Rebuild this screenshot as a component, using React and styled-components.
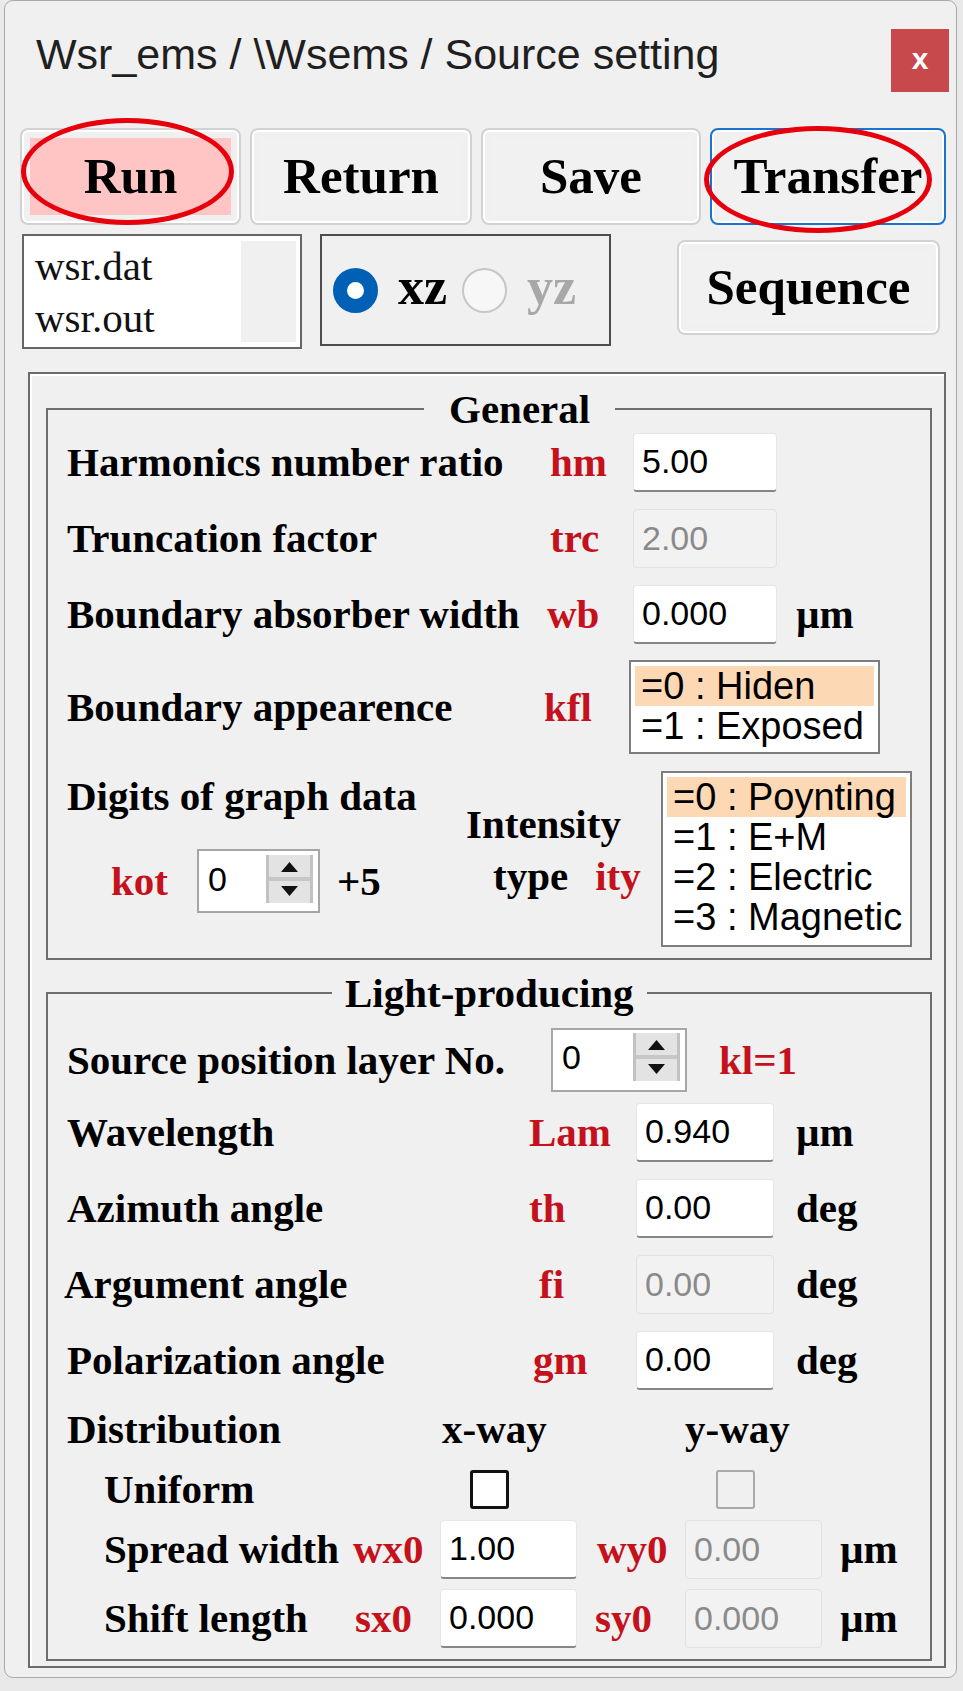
import React from "react"
import styled, {createGlobalStyle} from "styled-components"

const SERIF = `"Liberation Serif", "Times New Roman", serif`
const SANS = `"Liberation Sans", Arial, sans-serif`
const RED = "#c4111b"

const GlobalStyle = createGlobalStyle`
  html, body {
    margin: 0;
    padding: 0;
  }
  body {
    background: #e9e9e9;
    font-family: ${SERIF};
  }
  * {
    box-sizing: border-box;
  }
`

const Window = styled.div`
  margin-left: 4px;
  width: 953px;
  height: 1678px;
  background: #f0f0f0;
  border: 1px solid #a9a9a9;
  border-radius: 9px;
`

const TitleBar = styled.div`
  display: flex;
  align-items: flex-start;
  height: 110px;
  padding: 0 7px 0 31px;
`

const Title = styled.div`
  flex: 1;
  margin-top: 29px;
  font: 43px/48px ${SANS};
  color: #1f1f1f;
  white-space: nowrap;
`

const CloseButton = styled.div`
  display: flex;
  align-items: center;
  justify-content: center;
  width: 58px;
  height: 63px;
  margin-top: 28px;
  background: #c7494b;
  color: #fff;
  font: bold 30px/1 ${SANS};
  padding-bottom: 4px;
`

const Toolbar = styled.div`
  display: grid;
  grid-template-columns: 221px 222px 220px 236px;
  column-gap: 9px;
  margin: 17px 0 0 15px;
`

const Button = styled.div`
  position: relative;
  display: flex;
  align-items: center;
  justify-content: center;
  width: ${p => p.$w ? `${p.$w}px` : "auto"};
  height: ${p => p.$h || 97}px;
  margin: ${p => p.$m || "0"};
  padding: 8px;
  border: 2px solid ${p => p.$focused ? "#1a73cf" : "#d2d2d2"};
  border-radius: 8px;
  background: ${p => p.$tint || "#f1f1f1"};
  background-clip: content-box;
  box-shadow: inset 0 0 0 2px #fff;
  font: bold 51px/1 ${SERIF};
  color: #000;
  white-space: nowrap;
`

const Ellipse = styled.span`
  position: absolute;
  left: ${p => p.$x}px;
  top: ${p => p.$y}px;
  width: ${p => p.$w}px;
  height: 107px;
  border: 5px solid #e6000c;
  border-radius: 50%;
  pointer-events: none;
`

const SecondRow = styled.div`
  display: flex;
  align-items: flex-start;
  margin: 9px 0 0 17px;
`

const FileList = styled.div`
  display: flex;
  width: 280px;
  height: 115px;
  border: 2px solid #666;
  background: #fff;
`

const FileNames = styled.div`
  flex: 1;
  padding: 4px 0 0 11px;
  font: 41px/52px ${SERIF};
  color: #111;
`

const ScrollTrack = styled.div`
  width: 55px;
  margin: 5px 4px 5px 0;
  background: #f0f0f0;
`

const RadioBox = styled.div`
  display: flex;
  align-items: center;
  width: 291px;
  height: 112px;
  margin-left: 18px;
  padding-left: 11px;
  border: 2px solid #4d4d4d;
`

const Radio = styled.span`
  display: block;
  flex: none;
  width: 45px;
  height: 45px;
  margin-left: ${p => p.$ml || 0}px;
  border-radius: 50%;
  background: ${p => p.$checked ? "#fff" : "#f7f7f7"};
  border: ${p => p.$checked ? "14px solid #0060b6" : "2px solid #c6c6c6"};
`

const RadioLabel = styled.span`
  margin-left: 20px;
  font: bold 52px/1 ${SERIF};
  color: ${p => p.$off ? "#a8a8a8" : "#000"};
  padding-bottom: 6px;
`

const OuterGroup = styled.div`
  width: 918px;
  height: 1296px;
  margin: 23px 0 0 23px;
  padding: 12px 12px 0 16px;
  border: 2px solid #6b6b6b;
  box-shadow: inset 2px 2px 0 #fff;
`

const Group = styled.fieldset`
  min-width: 0;
  margin: 0 0 ${p => p.$mb || 0}px;
  padding: 0;
  border: 2px solid #6e6e6e;
`

const Legend = styled.legend`
  margin-left: ${p => p.$offset}px;
  padding: 0 ${p => p.$pad}px;
  font: bold 41px/46px ${SERIF};
  color: #000;
`

const GroupBody = styled.div`
  display: flex;
  flex-direction: column;
  padding: ${p => p.$pt || 0}px 0 11px 19px;
`

const FieldRow = styled.div`
  display: grid;
  grid-template-columns: 461px ${p => p.$codeW}px ${p => p.$inW}px auto;
  align-items: center;
  height: ${p => p.$h || 60}px;
  margin-top: ${p => p.$mt || 0}px;
`

const Label = styled.span`
  margin-left: ${p => p.$ml || 0}px;
  padding-left: ${p => p.$pl || 0}px;
  font: bold 41px/46px ${SERIF};
  color: #000;
  white-space: nowrap;
`

const Code = styled.span`
  margin-right: ${p => p.$mr || 0}px;
  padding-left: ${p => p.$pl || 0}px;
  font: bold 41px/46px ${SERIF};
  color: ${RED};
  white-space: nowrap;
`

const Unit = styled.span`
  padding-left: ${p => p.$pl || 0}px;
  font: bold 41px/46px ${SERIF};
  color: #000;
`

const TextBox = styled.input`
  display: block;
  width: 100%;
  height: ${p => p.$h || 59}px;
  margin: 0;
  padding: 0 0 0 8px;
  border: 1px solid ${p => p.$off ? "#e1e1e1" : "#e6e6e6"};
  border-bottom: ${p => p.$off ? "1px solid #e1e1e1" : "2px solid #868686"};
  border-radius: 4px;
  background: ${p => p.$off ? "#f2f2f2" : "#fff"};
  font: 34px ${SANS};
  color: ${p => p.$off ? "#8a8a8a" : "#000"};
  outline: none;
`

const ListBox = styled.div`
  width: 251px;
  height: ${p => p.$h}px;
  margin: ${p => p.$m || "0"};
  padding: 4px;
  border: 2px solid #7d7d7d;
  background: #fff;
  font: 38px/40px ${SANS};
  color: #000;
  justify-self: start;
`

const ListItem = styled.div`
  padding-left: 6px;
  background: ${p => p.$selected ? "#fdd8b5" : "transparent"};
  white-space: nowrap;
`

const DigitsRow = styled.div`
  display: flex;
  align-items: flex-start;
  height: 177px;
  margin-top: 17px;
`

const DigitsBlock = styled.div`
  display: flex;
  flex-direction: column;
  width: 399px;
  padding-top: 3px;
`

const KotLine = styled.div`
  display: flex;
  align-items: center;
  margin-top: 30px;
  padding-left: 44px;
`

const IntensityBlock = styled.div`
  display: flex;
  flex-direction: column;
  width: 195px;
  padding-top: 31px;
`

const TypeLine = styled.div`
  display: flex;
  margin-top: 6px;
  padding-left: 27px;
`

const SpinFrame = styled.div`
  display: flex;
  justify-content: space-between;
  align-items: flex-start;
  width: ${p => p.$w}px;
  height: 64px;
  padding: ${p => p.$pt || 4}px 5px 0 9px;
  border: 2px solid #a6a6a6;
  background: #fff;
  font: 34px/48px ${SANS};
  color: #000;
`

const SourceRow = styled.div`
  display: grid;
  grid-template-columns: 484px 136px auto;
  align-items: center;
  height: 64px;
`

const DistRow = styled.div`
  display: grid;
  grid-template-columns: 375px 243px auto;
  align-items: center;
  height: 58px;
  margin-top: 10px;
`

const SubRow = styled.div`
  display: grid;
  grid-template-columns: 249px 87px 137px 108px 137px auto;
  align-items: center;
  height: ${p => p.$h || 60}px;
  margin-top: ${p => p.$mt || 0}px;
  padding-left: 37px;
`

const CheckBox = styled.span`
  display: block;
  width: 39px;
  height: 39px;
  margin-left: ${p => p.$ml || 0}px;
  border-radius: 3px;
  border: ${p => p.$off ? "2px solid #a9a9a9" : "3px solid #111"};
  background: ${p => p.$off ? "#f0f0f0" : "#fff"};
`

const Spinner = () => (
  <svg width="47" height="48" viewBox="0 0 47 48">
    <rect x="0" y="0" width="47" height="48" fill="#e3e3e3" />
    <rect x="0" y="0" width="3" height="48" fill="#c2c2c2" />
    <rect x="44" y="0" width="3" height="48" fill="#c2c2c2" />
    <rect x="3" y="22" width="41" height="4" fill="#c6c6c6" />
    <path d="M23.5 7 L32 17 L15 17 Z" fill="#111" />
    <path d="M15 31 L32 31 L23.5 41 Z" fill="#111" />
  </svg>
)

const SpinBox = ({width, top}) => (
  <SpinFrame $w={width} $pt={top}>
    <span>0</span>
    <Spinner />
  </SpinFrame>
)

const GENERAL = {codeW: 105, inW: 144, unitPl: 19}
const LIGHT = {codeW: 108, inW: 138, unitPl: 22}

const Field = ({cfg, label, code, codePl, value, off, unit, mt, labelMl}) => (
  <FieldRow $codeW={cfg.codeW} $inW={cfg.inW} $mt={mt}>
    <Label $ml={labelMl}>{label}</Label>
    <Code $pl={codePl}>{code}</Code>
    <TextBox value={value} readOnly disabled={off} $off={off} />
    {unit ? <Unit $pl={cfg.unitPl}>{unit}</Unit> : <span />}
  </FieldRow>
)

const App = () => (
  <>
    <GlobalStyle />
    <Window>
      <TitleBar>
        <Title>Wsr_ems / \Wsems / Source setting</Title>
        <CloseButton>x</CloseButton>
      </TitleBar>

      <Toolbar>
        <Button $tint="#ffc4c4">
          Run
          <Ellipse $x={-1} $y={-12} $w={213} />
        </Button>
        <Button>Return</Button>
        <Button>Save</Button>
        <Button $focused>
          Transfer
          <Ellipse $x={-8} $y={-4} $w={228} />
        </Button>
      </Toolbar>

      <SecondRow>
        <FileList>
          <FileNames>
            <div>wsr.dat</div>
            <div>wsr.out</div>
          </FileNames>
          <ScrollTrack />
        </FileList>
        <RadioBox>
          <Radio $checked />
          <RadioLabel>xz</RadioLabel>
          <Radio $ml={15} />
          <RadioLabel $off>yz</RadioLabel>
        </RadioBox>
        <Button $w={263} $h={95} $m="6px 0 0 66px">Sequence</Button>
      </SecondRow>

      <OuterGroup>
        <Group $mb={10}>
          <Legend $offset={376} $pad={25}>General</Legend>
          <GroupBody>
            <Field cfg={GENERAL} label="Harmonics number ratio" code="hm" codePl={22} value="5.00" />
            <Field cfg={GENERAL} label="Truncation factor" code="trc" codePl={22} value="2.00" off mt={16} />
            <Field cfg={GENERAL} label="Boundary absorber width" code="wb" codePl={19} value="0.000" unit="µm" mt={16} />

            <FieldRow $codeW={GENERAL.codeW} $inW={GENERAL.inW} $h={93} $mt={16}>
              <Label>Boundary appearence</Label>
              <Code $pl={16}>kfl</Code>
              <ListBox $h={94} $m="0 0 0 -4px">
                <ListItem $selected>=0 : Hiden</ListItem>
                <ListItem>=1 : Exposed</ListItem>
              </ListBox>
            </FieldRow>

            <DigitsRow>
              <DigitsBlock>
                <Label>Digits of graph data</Label>
                <KotLine>
                  <Code $mr={29}>kot</Code>
                  <SpinBox width={123} top={4} />
                  <Label $ml={17}>+5</Label>
                </KotLine>
              </DigitsBlock>
              <IntensityBlock>
                <Label>Intensity</Label>
                <TypeLine>
                  <Label>type</Label>
                  <Code $pl={27}>ity</Code>
                </TypeLine>
              </IntensityBlock>
              <ListBox $h={176} $m="1px 0 0 0">
                <ListItem $selected>=0 : Poynting</ListItem>
                <ListItem>=1 : E+M</ListItem>
                <ListItem>=2 : Electric</ListItem>
                <ListItem>=3 : Magnetic</ListItem>
              </ListBox>
            </DigitsRow>
          </GroupBody>
        </Group>

        <Group>
          <Legend $offset={284} $pad={13}>Light-producing</Legend>
          <GroupBody $pt={12}>
            <SourceRow>
              <Label>Source position layer No.</Label>
              <SpinBox width={136} top={3} />
              <Code $pl={32}>kl=1</Code>
            </SourceRow>
            <Field cfg={LIGHT} label="Wavelength" code="Lam" codePl={1} value="0.940" unit="µm" mt={10} />
            <Field cfg={LIGHT} label="Azimuth angle" code="th" codePl={1} value="0.00" unit="deg" mt={16} />
            <Field cfg={LIGHT} label="Argument angle" code="fi" codePl={11} value="0.00" unit="deg" off mt={16} labelMl={-3} />
            <Field cfg={LIGHT} label="Polarization angle" code="gm" codePl={5} value="0.00" unit="deg" mt={16} />

            <DistRow>
              <Label>Distribution</Label>
              <Label>x-way</Label>
              <Label>y-way</Label>
            </DistRow>

            <SubRow $h={46} $mt={8}>
              <Label>Uniform</Label>
              <span />
              <CheckBox $ml={30} />
              <span />
              <CheckBox $ml={31} $off />
            </SubRow>

            <SubRow $mt={7}>
              <Label>Spread width</Label>
              <Code>wx0</Code>
              <TextBox value="1.00" readOnly />
              <Code $pl={20}>wy0</Code>
              <TextBox value="0.00" readOnly disabled $off />
              <Unit $pl={18}>µm</Unit>
            </SubRow>

            <SubRow $mt={9}>
              <Label>Shift length</Label>
              <Code $pl={2}>sx0</Code>
              <TextBox value="0.000" readOnly />
              <Code $pl={18}>sy0</Code>
              <TextBox value="0.000" readOnly disabled $off />
              <Unit $pl={18}>µm</Unit>
            </SubRow>
          </GroupBody>
        </Group>
      </OuterGroup>
    </Window>
  </>
)

export default App
